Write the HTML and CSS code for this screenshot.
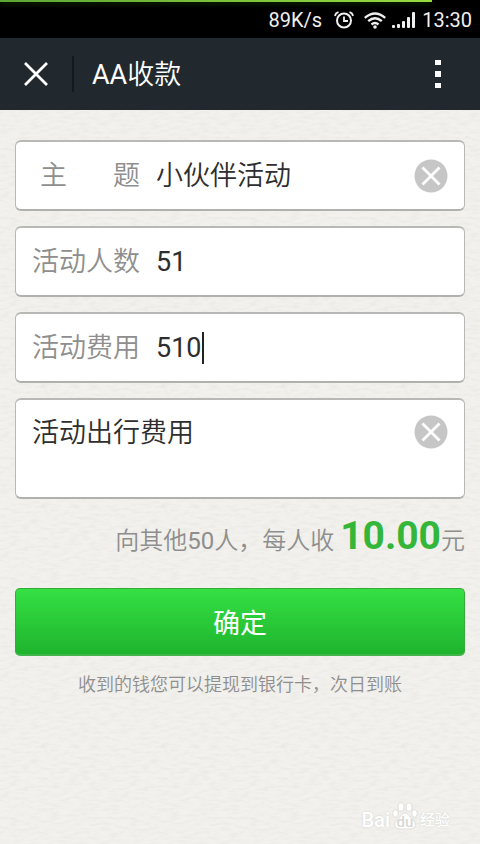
FILE: index.html
```html
<!DOCTYPE html>
<html lang="zh-CN">
<head>
<meta charset="utf-8">
<meta name="viewport" content="width=device-width, initial-scale=1">
<title>AA收款</title>
<link rel="stylesheet" href="styles.css">
</head>
<body>
<div class="status">
  <div class="progress"></div>
  <span>89K/s</span>
  <svg class="alarm" width="20" height="18" viewBox="0 0 20 18" fill="none" stroke="#f0f0f0" stroke-width="2">
    <circle cx="10" cy="9.500" r="7"/><path d="M10 5.500V10h4" stroke-width="1.800"/><path d="M1 5Q1.500 2 4.500 1.200M19 5Q18.500 2 15.500 1.200" stroke-width="1.800"/>
  </svg>
  <svg class="wifi" width="22" height="17" viewBox="0 0 22 17" fill="none" stroke="#f0f0f0" stroke-width="2.400">
    <path d="M.8 5.800Q11-3 21.200 5.800M4.200 9.200Q11 3.200 17.800 9.200M7.500 12.500Q11 9.500 14.500 12.500"/><circle cx="11" cy="15" r="1.800" fill="#f0f0f0" stroke="none"/>
  </svg>
  <svg class="signal" width="24" height="16" viewBox="0 0 24 16" fill="#f0f0f0">
    <rect x="0" y="13" width="3" height="3" rx="1"/><rect x="5" y="12" width="3" height="4" rx="1"/><rect x="10" y="9" width="3" height="7" rx="1"/><rect x="15" y="5" width="3" height="11" rx="1"/><rect x="20" y="0" width="3" height="16" rx="1"/>
  </svg>
  <span>13:30</span>
</div>
<header class="bar">
  <button class="close" type="button" aria-label="关闭">
    <svg width="24" height="24" viewBox="0 0 24 24" stroke="#fff" stroke-width="2.800"><path d="M1 1L23 23M23 1L1 23"/></svg>
  </button>
  <h1><span class="number">AA</span>收款</h1>
  <button class="more" type="button" aria-label="更多">
    <svg width="6" height="28" viewBox="0 0 6 28" fill="#fff"><path d="M0 0h6v5H0zM0 11h6v6H0zM0 23h6v5H0z"/></svg>
  </button>
</header>
<main>
  <form class="form">
    <div class="field">
      <label class="label spread" for="topic"><span>主</span><span>题</span></label>
      <input class="value grow" id="topic" type="text" value="小伙伴活动">
      <button class="clear" type="button" aria-label="清除主题">
        <svg width="34" height="34" viewBox="0 0 34 34"><circle cx="17" cy="17" r="16.500" fill="#c6c6c6"/><path d="M8.500 8.500L25.500 25.500M25.500 8.500L8.500 25.500" stroke="#fff" stroke-width="2.800"/></svg>
      </button>
    </div>
    <div class="field">
      <label class="label" for="people">活动人数</label>
      <input class="value number grow" id="people" type="text" inputmode="numeric" value="51">
    </div>
    <div class="field">
      <label class="label" for="cost">活动费用</label>
      <input class="value number digits" id="cost" type="text" inputmode="numeric" value="510">
      <span class="caret"></span>
    </div>
    <div class="field note">
      <textarea class="value grow" rows="2" aria-label="活动说明">活动出行费用</textarea>
      <button class="clear" type="button" aria-label="清除说明">
        <svg width="34" height="34" viewBox="0 0 34 34"><circle cx="17" cy="17" r="16.500" fill="#c6c6c6"/><path d="M8.500 8.500L25.500 25.500M25.500 8.500L8.500 25.500" stroke="#fff" stroke-width="2.800"/></svg>
      </button>
    </div>
    <p class="summary">向其他<span class="number">50</span>人，每人收 <strong>10.00</strong>元</p>
    <button class="submit" type="submit">确定</button>
    <p class="hint">收到的钱您可以提现到银行卡，次日到账</p>
  </form>
</main>
<footer class="mark">
  <span class="latin">Bai</span>
  <span class="paw">
    <svg width="26" height="28" viewBox="0 0 26 28" fill="#fff" stroke="#deddd8" stroke-width="1">
      <ellipse cx="3.500" cy="11.500" rx="2.800" ry="3.800"/><ellipse cx="9" cy="5" rx="3" ry="4.200"/><ellipse cx="17" cy="5" rx="3" ry="4.200"/><ellipse cx="22.500" cy="11.500" rx="2.800" ry="3.800"/>
      <path d="M13 11C9.500 11 8.500 15 5.500 17.500C1 21 2 27 8 27H18C24 27 25 21 20.500 17.500C17.500 15 16.500 11 13 11Z"/>
    </svg>
    <span class="du">du</span>
  </span>
  <span class="cn">经验</span>
</footer>
</body>
</html>
```
FILE: styles.css
```css
* { box-sizing: border-box; }

body {
  margin: 0;
  min-height: 100vh;
  display: flex;
  flex-direction: column;
  font-family: Roboto, "Noto Sans CJK SC", sans-serif;
  background: #f2f1ed url("data:image/svg+xml,%3Csvg xmlns='http://www.w3.org/2000/svg' width='120' height='120'%3E%3Cfilter id='n' x='0' y='0' width='100%25' height='100%25'%3E%3CfeTurbulence type='fractalNoise' baseFrequency='.1 .35' numOctaves='3' stitchTiles='stitch'/%3E%3CfeColorMatrix values='0 0 0 0 .6 0 0 0 0 .58 0 0 0 0 .52 .4 0 0 0 -.16'/%3E%3C/filter%3E%3Crect width='120' height='120' filter='url(%23n)'/%3E%3C/svg%3E");
}

button, input, textarea {
  margin: 0;
  padding: 0;
  border: 0;
  background: none;
  font-family: inherit;
  outline: 0;
}

svg { display: block; }

.status {
  position: relative;
  height: 38px;
  padding: 2px 8px 0 0;
  display: flex;
  align-items: center;
  justify-content: flex-end;
  background: #000;
  color: #f0f0f0;
  font-size: 20px;
  line-height: 24px;
}

.progress {
  position: absolute;
  top: 0;
  left: 0;
  width: 90%;
  height: 2px;
  background: linear-gradient(90deg, #5da636, #97dc40);
  box-shadow: 0 2px 4px #123800;
}

.alarm { margin-left: 12px; }
.wifi { margin-left: 10px; }
.signal { margin: 0 6px; }

.bar {
  height: 72px;
  display: flex;
  align-items: center;
  background: #22292e;
  color: #fff;
}

.close {
  width: 74px;
  height: 36px;
  padding-left: 24px;
  border-right: 2px solid #14191c;
}

.bar h1 {
  flex: 1;
  margin: 0;
  padding: 2px 0 0 18px;
  font-size: 27px;
  line-height: 40px;
  font-weight: 350;
}

.more { padding: 0 39px; }

.form {
  padding: 30px 15px 0;
  display: flex;
  flex-direction: column;
}

.field {
  height: 71px;
  margin-bottom: 15px;
  padding: 0 16px;
  display: flex;
  align-items: center;
  border: 2px solid #b8b8b6;
  border-bottom-color: #b0b0ae;
  border-width: 2px 1px 2px 1px;
  border-radius: 6px;
  background: #fff;
}

.label {
  width: 108px;
  margin-right: 16px;
  color: #8e8e8e;
  font-size: 27px;
  line-height: 40px;
  font-weight: 350;
}

.spread {
  display: flex;
  justify-content: space-between;
  padding-left: 8px;
}

.value {
  color: #2e2e2e;
  font-size: 27px;
  line-height: 40px;
  font-weight: 350;
}

.number { font-weight: 400; }

.grow {
  flex: 1;
  min-width: 0;
}

.digits { width: 3ch; }

.caret {
  width: 2px;
  height: 32px;
  background: #222;
}

.clear { width: 34px; height: 34px; }

.note {
  height: 101px;
  margin-bottom: 0;
  padding-top: 13px;
  align-items: flex-start;
}

.note textarea {
  height: 80px;
  resize: none;
  overflow: hidden;
}

.note .clear { margin-top: 2px; }

.summary {
  margin: 12px 0 0;
  color: #8e8e8e;
  font-size: 24px;
  line-height: 50px;
  text-align: right;
  font-weight: 350;
}

.summary strong {
  color: #34b63a;
  font-size: 39px;
  font-weight: 700;
}

.submit {
  height: 68px;
  margin-top: 22px;
  border: 1px solid #35ab3b;
  border-bottom: 2px solid #41b549;
  border-radius: 5px;
  background: linear-gradient(#35e044, #1eb42d);
  color: #fff;
  font-size: 27px;
  font-weight: 400;
}

.hint {
  margin: 14px 0 0;
  color: #8e8e8e;
  font-size: 18px;
  line-height: 30px;
  text-align: center;
  font-weight: 350;
}

.mark {
  margin-top: auto;
  padding: 0 30px 14px 0;
  display: flex;
  justify-content: flex-end;
  align-items: flex-end;
  color: #fff;
  font-size: 20px;
  line-height: 20px;
  font-weight: 500;
  text-shadow: 0 0 2px #d0cfca;
}

.paw { position: relative; margin: 0 2px; }

.du {
  position: absolute;
  right: 0;
  bottom: 0;
  left: 0;
  color: #d8d7d2;
  font-size: 15px;
  line-height: 16px;
  text-align: center;
  text-shadow: none;
}

.cn { font-size: 15px; }
```
